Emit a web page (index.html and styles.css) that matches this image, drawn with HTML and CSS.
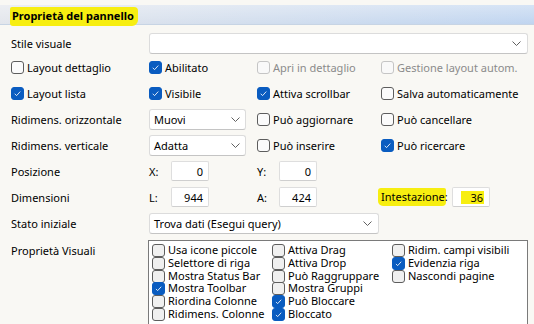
FILE: index.html
```html
<!DOCTYPE html>
<html lang="it">
<head>
<meta charset="utf-8">
<title>Proprietà del pannello</title>
<link rel="stylesheet" href="styles.css">
</head>
<body>
<div class="panel-header"><span class="hl hl-title">Proprietà del pannello</span></div>
<div class="form">
  <div class="lbl r1">Stile visuale</div>
  <div class="select wide r1"><span></span><svg class="chev" width="9" height="5" viewBox="0 0 9 5"><path d="M0.5 0.5 L4.5 4.5 L8.5 0.5" /></svg></div>

  <label class="cb r2"><span class="box"></span>Layout dettaglio</label>
  <label class="cb r2"><span class="box on"><svg viewBox="0 0 13 13"><path d="M3.2 6.8 L5.4 9 L9.8 4.2"/></svg></span>Abilitato</label>
  <label class="cb dis r2"><span class="box"></span>Apri in dettaglio</label>
  <label class="cb dis r2"><span class="box"></span>Gestione layout autom.</label>

  <label class="cb r3"><span class="box on"><svg viewBox="0 0 13 13"><path d="M3.2 6.8 L5.4 9 L9.8 4.2"/></svg></span>Layout lista</label>
  <label class="cb r3"><span class="box on"><svg viewBox="0 0 13 13"><path d="M3.2 6.8 L5.4 9 L9.8 4.2"/></svg></span>Visibile</label>
  <label class="cb r3"><span class="box on"><svg viewBox="0 0 13 13"><path d="M3.2 6.8 L5.4 9 L9.8 4.2"/></svg></span>Attiva scrollbar</label>
  <label class="cb r3"><span class="box"></span>Salva automaticamente</label>

  <div class="lbl r4">Ridimens. orizzontale</div>
  <div class="cell r4"><div class="select small"><span>Muovi</span><svg class="chev" width="9" height="5" viewBox="0 0 9 5"><path d="M0.5 0.5 L4.5 4.5 L8.5 0.5" /></svg></div></div>
  <label class="cb r4"><span class="box"></span>Può aggiornare</label>
  <label class="cb r4"><span class="box"></span>Può cancellare</label>

  <div class="lbl r5">Ridimens. verticale</div>
  <div class="cell r5"><div class="select small"><span>Adatta</span><svg class="chev" width="9" height="5" viewBox="0 0 9 5"><path d="M0.5 0.5 L4.5 4.5 L8.5 0.5" /></svg></div></div>
  <label class="cb r5"><span class="box"></span>Può inserire</label>
  <label class="cb r5"><span class="box on"><svg viewBox="0 0 13 13"><path d="M3.2 6.8 L5.4 9 L9.8 4.2"/></svg></span>Può ricercare</label>

  <div class="lbl r6">Posizione</div>
  <div class="pair r6"><span class="plbl">X:</span><span class="num">0</span></div>
  <div class="pair r6"><span class="plbl">Y:</span><span class="num">0</span></div>
  <div class="r6"></div>

  <div class="lbl r7">Dimensioni</div>
  <div class="pair r7"><span class="plbl">L:</span><span class="num">944</span></div>
  <div class="pair r7"><span class="plbl">A:</span><span class="num">424</span></div>
  <div class="pair r7"><span class="hl hl-int">Intestazione:</span><span class="num"><span class="hl hl-num">36</span></span></div>

  <div class="lbl r8">Stato iniziale</div>
  <div class="cell span3 r8"><div class="select mid"><span>Trova dati (Esegui query)</span><svg class="chev" width="9" height="5" viewBox="0 0 9 5"><path d="M0.5 0.5 L4.5 4.5 L8.5 0.5" /></svg></div></div>

  <div class="lbl top">Proprietà Visuali</div>
  <div class="listbox">
    <div class="li"><span class="lb"></span>Usa icone piccole</div>
    <div class="li"><span class="lb"></span>Selettore di riga</div>
    <div class="li"><span class="lb"></span>Mostra Status Bar</div>
    <div class="li"><span class="lb on"><svg viewBox="0 0 12 13"><path d="M3 7 L5 9 L9.2 4.4"/></svg></span>Mostra Toolbar</div>
    <div class="li"><span class="lb"></span>Riordina Colonne</div>
    <div class="li"><span class="lb"></span>Ridimens. Colonne</div>
    <div class="li"><span class="lb"></span>Attiva Drag</div>
    <div class="li"><span class="lb"></span>Attiva Drop</div>
    <div class="li"><span class="lb"></span>Può Raggruppare</div>
    <div class="li"><span class="lb"></span>Mostra Gruppi</div>
    <div class="li"><span class="lb on"><svg viewBox="0 0 12 13"><path d="M3 7 L5 9 L9.2 4.4"/></svg></span>Può Bloccare</div>
    <div class="li"><span class="lb on"><svg viewBox="0 0 12 13"><path d="M3 7 L5 9 L9.2 4.4"/></svg></span>Bloccato</div>
    <div class="li"><span class="lb"></span>Ridim. campi visibili</div>
    <div class="li"><span class="lb on"><svg viewBox="0 0 12 13"><path d="M3 7 L5 9 L9.2 4.4"/></svg></span>Evidenzia riga</div>
    <div class="li"><span class="lb"></span>Nascondi pagine</div>
  </div>
</div>
</body>
</html>
```
FILE: styles.css
```css
* { box-sizing: border-box; }
html, body {
  margin: 0;
  padding: 0;
  background: #f9f8f4;
  overflow: hidden;
}
body {
  font-family: "Noto Sans", "Open Sans", sans-serif;
  font-size: 11px;
  color: #000;
  width: 534px;
  height: 324px;
}
.panel-header {
  margin-top: 5px;
  height: 20px;
  padding-left: 10px;
  display: flex;
  align-items: center;
  background:
    linear-gradient(to bottom, rgba(255,255,255,0.35), rgba(255,255,255,0)),
    linear-gradient(to right, #e3e6ec, #c0d5f0);
  border-bottom: 1px solid #c7d4e4;
  font-weight: bold;
}
.hl { background: #f7ee10; }
.hl-title {
  padding: 2px 4px 3px 2px;
  margin-top: 4px;
  border-radius: 2px 4px 6px 3px;
  line-height: 14px;
}
.form {
  margin-top: 6px;
  padding: 0 6px 0 11px;
  display: grid;
  grid-template-columns: 138px 108px 124px 1fr;
  grid-template-rows: 24px 25px 26px 26px 26px 26px 26px 26px auto;
  align-items: center;
}
.lbl { white-space: nowrap; grid-column: 1; }
.lbl.top { align-self: start; padding-top: 7px; }
.wide { grid-column: 2 / 5; }
.span3 { grid-column: 2 / 4; }
.select {
  height: 21px;
  background: #fff;
  border: 1px solid #dcdcdc;
  border-bottom-color: #c4c4c4;
  border-radius: 3px;
  display: flex;
  align-items: center;
  justify-content: space-between;
  padding: 0 6px 0 4px;
}
.select.small { width: 97px; padding-right: 5px; }
.select.mid { width: 230px; }
.chev path { fill: none; stroke: #606060; stroke-width: 1; }
.cb {
  display: flex;
  align-items: center;
  gap: 3px;
  white-space: nowrap;
}
.cb.dis { color: #8b8b8b; }
.box {
  width: 13px;
  height: 13px;
  flex: none;
  border: 1px solid #5d5d5d;
  border-radius: 3px;
  background: #fbfbfb;
  display: flex;
}
.cb.dis .box { border-color: #c5c5c5; background: #f9f9f9; }
.box.on, .lb.on { background: #0a5cc0; border-color: #0a5cc0; }
.box svg, .lb svg { width: 100%; height: 100%; }
.box svg path, .lb svg path { fill: none; stroke: #fff; stroke-width: 1; }
.pair { display: flex; align-items: center; }
.plbl { width: 22px; }
.num {
  width: 38px;
  height: 20px;
  flex: none;
  background: #fff;
  border: 1px solid #dedede;
  border-bottom-color: #cfcfcf;
  border-radius: 2px;
  display: flex;
  align-items: center;
  justify-content: flex-end;
  padding-right: 5px;
}
.hl-int {
  width: 68px;
  margin-left: -3px;
  margin-right: 6px;
  padding: 1px 0 2px 3px;
  border-radius: 3px 2px 4px 5px;
  white-space: nowrap;
}
.hl-num { padding: 0 1px 0 9px; line-height: 13px; }
.listbox {
  grid-column: 2 / 5;
  margin: 4px 0 0 -1px;
  height: 100px;
  background: #fff;
  border: 1px solid #7a7a7a;
  border-bottom: none;
  padding: 3px 0 0 3px;
  display: grid;
  grid-template-columns: 120px 120px 120px;
  grid-template-rows: repeat(6, 12.8px);
  grid-auto-flow: column;
  align-content: start;
}
.li {
  display: flex;
  align-items: center;
  gap: 3px;
  white-space: nowrap;
  line-height: 12.8px;
}
.lb {
  width: 13px;
  height: 13px;
  flex: none;
  border: 1px solid #5d5d5d;
  border-radius: 3px;
  background: #f0f0f0;
  display: flex;
}
```
